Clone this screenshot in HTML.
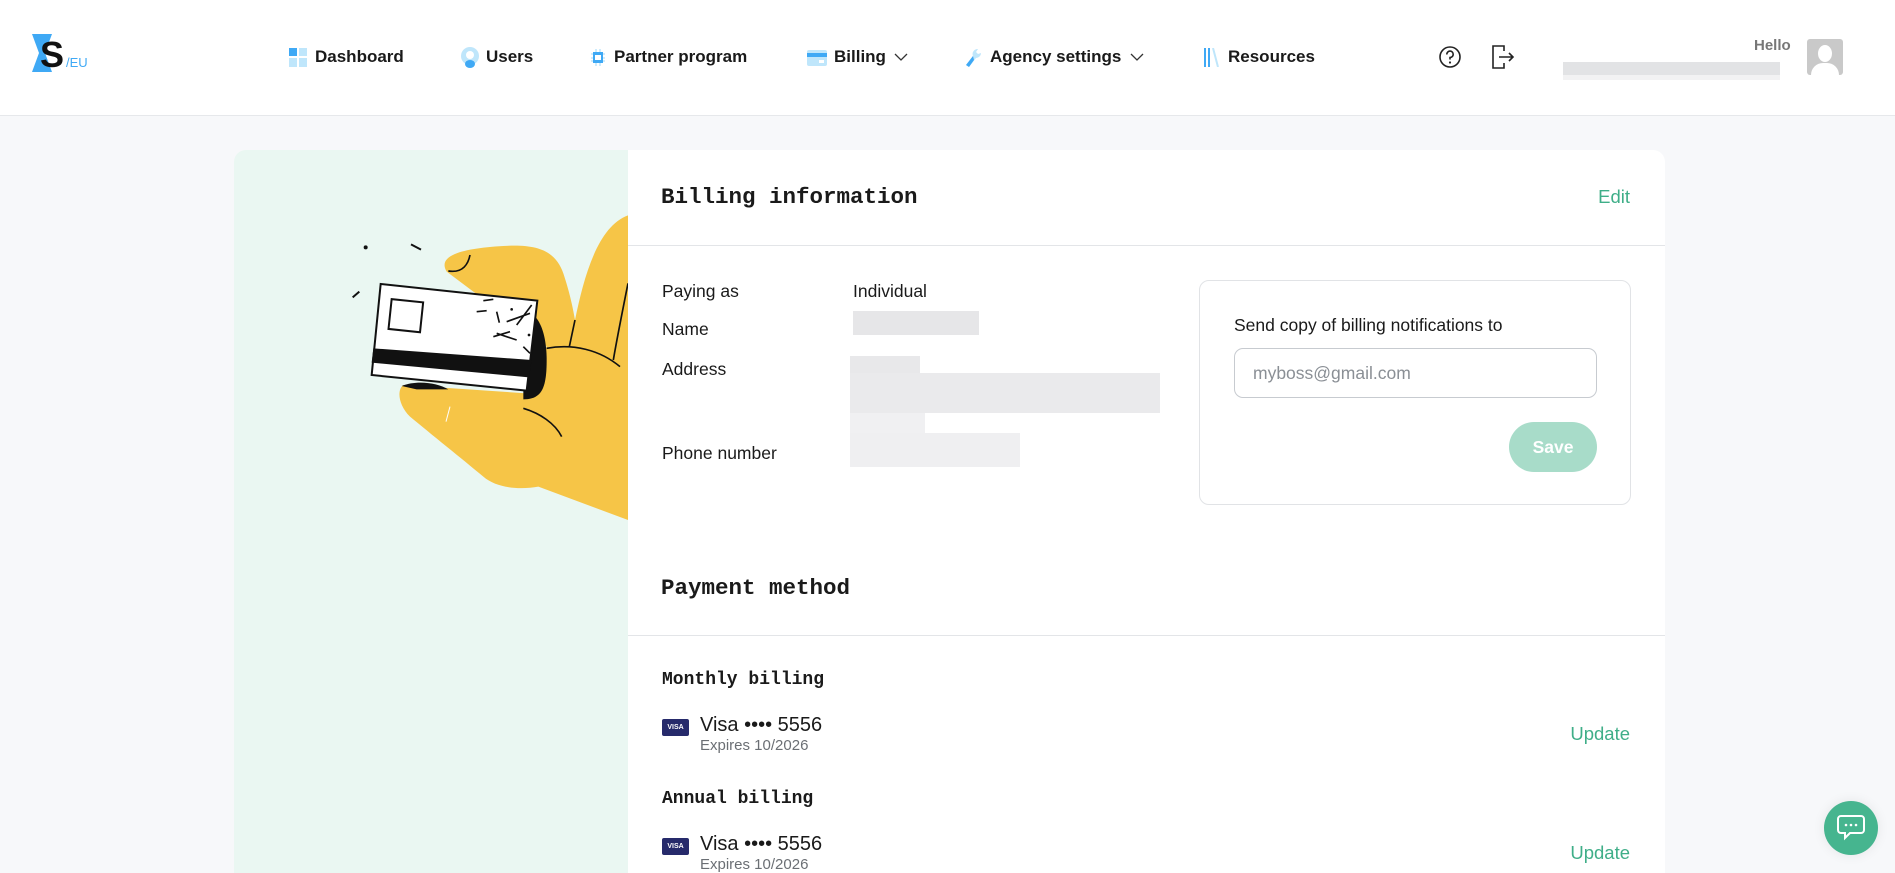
<!DOCTYPE html>
<html><head><meta charset="utf-8"><style>
*{margin:0;padding:0;box-sizing:border-box}
body{width:1895px;height:873px;overflow:hidden;background:#f7f8fa;font-family:"Liberation Sans",sans-serif;color:#1a1a1a;position:relative}
.abs{position:absolute}
header{position:absolute;left:0;top:0;width:1895px;height:116px;background:#fff;border-bottom:1px solid #e6e8eb}
.nav{position:absolute;top:47px;font-size:17px;font-weight:bold;line-height:20px;white-space:nowrap}
.mono{font-family:"Liberation Mono",monospace;font-weight:bold}
.lbl{position:absolute;left:662px;font-size:17.5px;line-height:22px}
.val{position:absolute;left:853px;font-size:17.5px;line-height:22px}
.blur{position:absolute;background:#e4e5e7}
.green{color:#3fae88;font-size:18.5px;position:absolute;right:265px}
</style></head><body>
<header>
 <svg class="abs" style="left:32px;top:34px" width="62" height="40" viewBox="0 0 62 40">
  <path d="M0 0H20L13 19L20 38H0L7 19Z" fill="#3fa9f5"/>
  <text x="8" y="33" font-family="Liberation Sans" font-size="36" font-weight="bold" fill="#111">S</text>
  <text x="34" y="33" font-family="Liberation Sans" font-size="13" fill="#3fa9f5">/EU</text>
 </svg>
 <svg class="abs" style="left:289px;top:48px" width="18" height="19"><rect x="0" y="0" width="8" height="8" fill="#3fa9f5"/><rect x="10" y="0" width="8" height="8" fill="#bfe6fb"/><rect x="0" y="10" width="8" height="9" fill="#bfe6fb"/><rect x="10" y="10" width="8" height="9" fill="#bfe6fb"/></svg>
 <div class="nav" style="left:315px">Dashboard</div>
 <svg class="abs" style="left:461px;top:47px" width="18" height="22"><circle cx="9" cy="9" r="9" fill="#bfe6fb"/><circle cx="9" cy="8" r="4" fill="#fff"/><ellipse cx="9" cy="17" rx="5" ry="4" fill="#3fa9f5"/></svg>
 <div class="nav" style="left:486px">Users</div>
 <svg class="abs" style="left:591px;top:49px" width="14" height="17"><rect x="2" y="3" width="10" height="11" fill="#3fa9f5"/><rect x="4" y="6" width="6" height="5" fill="#fff"/><path d="M0 5H2M0 9H2M0 12H2M12 5H14M12 9H14M12 12H14M5 0V3M9 0V3M5 14V17M9 14V17" stroke="#bfe6fb" stroke-width="1.5"/></svg>
 <div class="nav" style="left:614px">Partner program</div>
 <svg class="abs" style="left:807px;top:50px" width="20" height="16"><rect width="20" height="16" rx="2" fill="#bfe6fb"/><rect y="3" width="20" height="4" fill="#3fa9f5"/><rect x="12" y="10" width="5" height="3" fill="#fff"/></svg>
 <div class="nav" style="left:834px">Billing</div>
 <svg class="abs" style="left:894px;top:53px" width="14" height="9"><path d="M1 1L7 7L13 1" stroke="#333" fill="none" stroke-width="1.3"/></svg>
 <svg class="abs" style="left:964px;top:47px" width="18" height="22"><path d="M14 2A5 5 0 0 0 9 9L2 18L5 20L12 11A5 5 0 0 0 17 6L14 7L12 5Z" fill="#bfe6fb"/><path d="M9 9L2 18L5 20L10 13Z" fill="#3fa9f5"/></svg>
 <div class="nav" style="left:990px">Agency settings</div>
 <svg class="abs" style="left:1130px;top:53px" width="14" height="9"><path d="M1 1L7 7L13 1" stroke="#333" fill="none" stroke-width="1.3"/></svg>
 <svg class="abs" style="left:1203px;top:48px" width="16" height="19"><path d="M2 0V19M6 0V19" stroke="#3fa9f5" stroke-width="2"/><path d="M10 0L15 19" stroke="#bfe6fb" stroke-width="2"/></svg>
 <div class="nav" style="left:1228px">Resources</div>
 <svg class="abs" style="left:1438px;top:45px" width="24" height="24"><circle cx="12" cy="12" r="10" stroke="#222" stroke-width="1.6" fill="none"/><path d="M8.8 9.5A3.2 3.2 0 1 1 12 12.5V14.5" stroke="#222" stroke-width="1.6" fill="none"/><circle cx="12" cy="17.5" r="1.1" fill="#222"/></svg>
 <svg class="abs" style="left:1491px;top:44px" width="24" height="26"><path d="M13 7V2H2V24H13V19" stroke="#222" stroke-width="1.6" fill="none"/><path d="M8 13H22M18 9L22 13L18 17" stroke="#222" stroke-width="1.6" fill="none"/></svg>
 <div class="abs" style="left:1754px;top:37px;font-size:15px;font-weight:bold;color:#777">Hello</div>
 <div class="blur" style="left:1563px;top:62px;width:217px;height:13px;background:#e2e3e5"></div>
 <div class="blur" style="left:1563px;top:75px;width:217px;height:5px;background:#f2f2f3"></div>
 <div class="abs" style="left:1807px;top:39px;width:36px;height:36px;background:#c9c9c9;border-radius:3px;overflow:hidden">
  <div class="abs" style="left:11px;top:6px;width:14px;height:17px;border-radius:50%;background:#fff"></div>
  <div class="abs" style="left:4px;top:24px;width:28px;height:20px;border-radius:12px 12px 0 0;background:#fff"></div>
 </div>
</header>

<div class="abs" style="left:234px;top:150px;width:394px;height:723px;background:#eaf7f2;border-radius:12px 0 0 0;overflow:hidden"></div>
<svg class="abs" style="left:230px;top:140px" width="398" height="400" viewBox="0 0 1194 1200">
 <path d="M650 395C620 345 700 325 820 318C920 312 975 330 1000 400C1020 460 1030 510 1035 540C1060 420 1100 260 1194 226V1140L925 1040C870 1050 800 1045 760 1010C700 960 600 880 540 830C505 795 500 750 520 735L890 760L950 620Z" fill="#f6c547"/>
 <path d="M655 393C700 400 715 370 720 345" stroke="#111" stroke-width="5" fill="none"/>
 <path d="M1035 540L1018 620M1194 430C1180 500 1160 600 1150 660M950 625C1030 610 1110 630 1170 680M880 805C930 820 975 850 995 890" stroke="#111" stroke-width="5" fill="none"/>
 <path d="M880 515C935 515 950 600 950 660C950 745 935 778 880 778Z" fill="#111"/>
 <path d="M515 738C560 720 620 728 655 748L560 748Z" fill="#111"/>
 <path d="M452 432L922 482L890 752L425 705Z" fill="#fff" stroke="#111" stroke-width="6"/>
 <path d="M430 625L905 660L897 712L425 668Z" fill="#111"/>
 <rect x="480" y="482" width="95" height="90" transform="rotate(6 527 527)" fill="none" stroke="#111" stroke-width="6"/>
 <path d="M740 515L770 512M800 515L808 548M790 590L840 575M800 580L860 600M830 545L900 520M860 555L905 495M880 620L900 640M760 482L790 478" stroke="#111" stroke-width="5"/>
 <circle cx="845" cy="508" r="4" fill="#111"/><circle cx="897" cy="585" r="4" fill="#111"/>
 <circle cx="407" cy="322" r="6" fill="#111"/>
 <path d="M543 313L573 329M368 472L388 455" stroke="#111" stroke-width="6"/>
 <path d="M660 800L648 845" stroke="#fff" stroke-width="3"/>
</svg>

<div class="abs" style="left:628px;top:150px;width:1037px;height:723px;background:#fff;border-radius:0 12px 0 0"></div>
<div class="abs mono" style="left:661px;top:183px;font-size:22.5px;line-height:28px">Billing information</div>
<div class="green" style="top:186px">Edit</div>
<div class="abs" style="left:628px;top:245px;width:1037px;height:1px;background:#e3e5e8"></div>

<div class="lbl" style="top:280px">Paying as</div>
<div class="val" style="top:280px">Individual</div>
<div class="lbl" style="top:318px">Name</div>
<div class="blur" style="left:853px;top:311px;width:126px;height:24px;background:#e6e6e8"></div>
<div class="lbl" style="top:358px">Address</div>
<div class="blur" style="left:850px;top:356px;width:70px;height:20px;background:#e8e8ea"></div>
<div class="blur" style="left:850px;top:373px;width:310px;height:40px;background:#eaeaec"></div>
<div class="blur" style="left:850px;top:413px;width:75px;height:20px;background:#f0f0f2"></div>
<div class="lbl" style="top:442px">Phone number</div>
<div class="blur" style="left:850px;top:433px;width:170px;height:34px;background:#efeff1"></div>

<div class="abs" style="left:1199px;top:280px;width:432px;height:225px;border:1px solid #e1e3e6;border-radius:10px"></div>
<div class="abs" style="left:1234px;top:315px;font-size:17.5px">Send copy of billing notifications to</div>
<div class="abs" style="left:1234px;top:348px;width:363px;height:50px;border:1px solid #c7cbd0;border-radius:9px;font-size:17.5px;color:#8a8f95;padding:14px 0 0 18px">myboss@gmail.com</div>
<div class="abs" style="left:1509px;top:422px;width:88px;height:50px;background:#a8dcc9;border-radius:25px;color:#fff;font-weight:bold;font-size:17.5px;text-align:center;line-height:50px">Save</div>

<div class="abs mono" style="left:661px;top:574px;font-size:22.5px;line-height:28px">Payment method</div>
<div class="abs" style="left:628px;top:635px;width:1037px;height:1px;background:#e3e5e8"></div>

<div class="abs mono" style="left:662px;top:669px;font-size:18px;line-height:22px">Monthly billing</div>
<div class="abs" style="left:662px;top:719px;width:27px;height:17px;background:#262a6b;border-radius:2px;color:#fff;font-size:7px;font-weight:bold;text-align:center;line-height:17px">VISA</div>
<div class="abs" style="left:700px;top:714px;font-size:20px">Visa •••• 5556</div>
<div class="abs" style="left:700px;top:737px;font-size:15px;color:#6b6f74">Expires 10/2026</div>
<div class="green" style="top:723px">Update</div>

<div class="abs mono" style="left:662px;top:788px;font-size:18px;line-height:22px">Annual billing</div>
<div class="abs" style="left:662px;top:838px;width:27px;height:17px;background:#262a6b;border-radius:2px;color:#fff;font-size:7px;font-weight:bold;text-align:center;line-height:17px">VISA</div>
<div class="abs" style="left:700px;top:833px;font-size:20px">Visa •••• 5556</div>
<div class="abs" style="left:700px;top:856px;font-size:15px;color:#6b6f74">Expires 10/2026</div>
<div class="green" style="top:842px">Update</div>

<div class="abs" style="left:1824px;top:801px;width:54px;height:54px;border-radius:50%;background:#46b58f;box-shadow:0 0 12px rgba(0,0,0,.08)"></div>
<svg class="abs" style="left:1837px;top:815px" width="28" height="26"><path d="M4 1H24A3 3 0 0 1 27 4V15A3 3 0 0 1 24 18H13L8 23V18H4A3 3 0 0 1 1 15V4A3 3 0 0 1 4 1Z" stroke="#fff" stroke-width="2" fill="none"/><circle cx="9" cy="10" r="1.3" fill="#fff"/><circle cx="14" cy="10" r="1.3" fill="#fff"/><circle cx="19" cy="10" r="1.3" fill="#fff"/></svg>
</body></html>
